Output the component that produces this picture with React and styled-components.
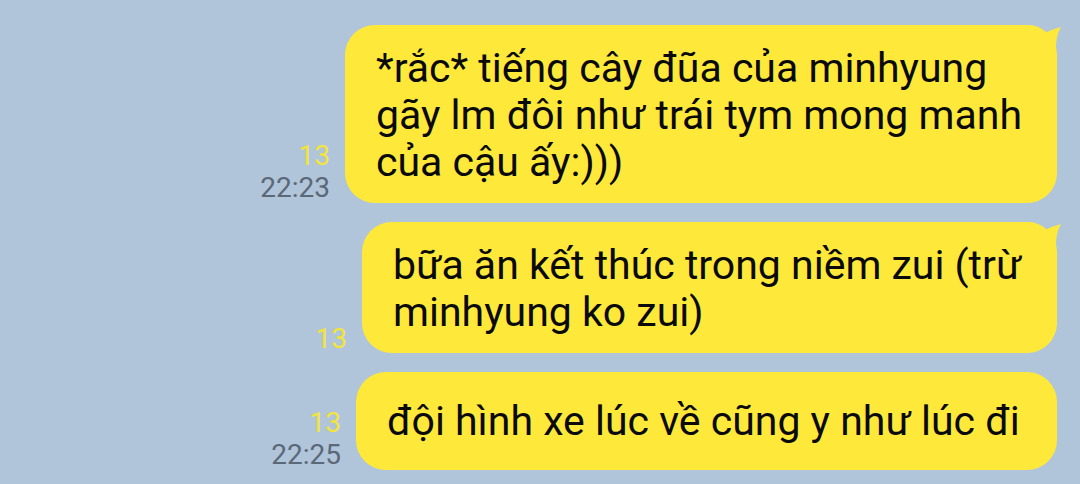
import React from "react";
import styled, { createGlobalStyle } from "styled-components";

const Global = createGlobalStyle`
  html, body { margin: 0; padding: 0; background: #b0c4da; }
  body { font-family: Roboto, "Noto Sans", sans-serif; }
`;

const Chat = styled.div`
  width: 1080px;
  height: 484px;
  box-sizing: border-box;
  padding: 25px 23px 0 0;
  display: flex;
  flex-direction: column;
  align-items: flex-end;
  gap: 19px;
  overflow: hidden;
`;

const Row = styled.div`
  display: flex;
  align-items: flex-end;
  gap: 15px;
`;

const Meta = styled.div`
  display: flex;
  flex-direction: column;
  align-items: flex-end;
  font-size: 28px;
  line-height: 32px;
  margin-bottom: ${(p) => p.$mb ?? 0}px;
`;

const Read = styled.span`
  color: #f3e43a;
`;

const Time = styled.span`
  color: #5a6878;
`;

const Bubble = styled.div`
  position: relative;
  box-sizing: border-box;
  width: ${(p) => p.$w}px;
  min-height: ${(p) => p.$minH || 0}px;
  padding: ${(p) => p.$pad};
  background: #fee93a;
  border-radius: 30px;
  color: #0a0a0a;
  font-size: 41px;
  line-height: 47px;
  display: flex;
  align-items: center;
`;

const Tail = styled.svg`
  position: absolute;
  top: 0;
  right: -6px;
  width: 36px;
  height: 36px;
`;

const TailShape = () => (
  <Tail viewBox="0 0 36 36">
    <path
      d="M0 0 Q13 0 18 8 Q26 4 34 2 Q30 8 29 20 L29 36 L0 36 Z"
      fill="#fee93a"
    />
  </Tail>
);

export default function App() {
  return (
    <>
      <Global />
      <Chat>
        <Row>
          <Meta $mb={-1}>
            <Read>13</Read>
            <Time>22:23</Time>
          </Meta>
          <Bubble $w={712} $pad="20px 28px 17px 31px">
            <TailShape />
            <span>
              *rắc* tiếng cây đũa của minhyung gãy lm đôi như trái tym mong
              manh của cậu ấy:)))
            </span>
          </Bubble>
        </Row>
        <Row>
          <Meta $mb={-2}>
            <Read>13</Read>
          </Meta>
          <Bubble $w={695} $pad="20px 28px 17px 31px">
            <TailShape />
            <span>bữa ăn kết thúc trong niềm zui (trừ minhyung ko zui)</span>
          </Bubble>
        </Row>
        <Row>
          <Meta $mb={-1}>
            <Read>13</Read>
            <Time>22:25</Time>
          </Meta>
          <Bubble $w={701} $minH={98} $pad="0 28px 0 31px">
            <span>đội hình xe lúc về cũng y như lúc đi</span>
          </Bubble>
        </Row>
      </Chat>
    </>
  );
}
